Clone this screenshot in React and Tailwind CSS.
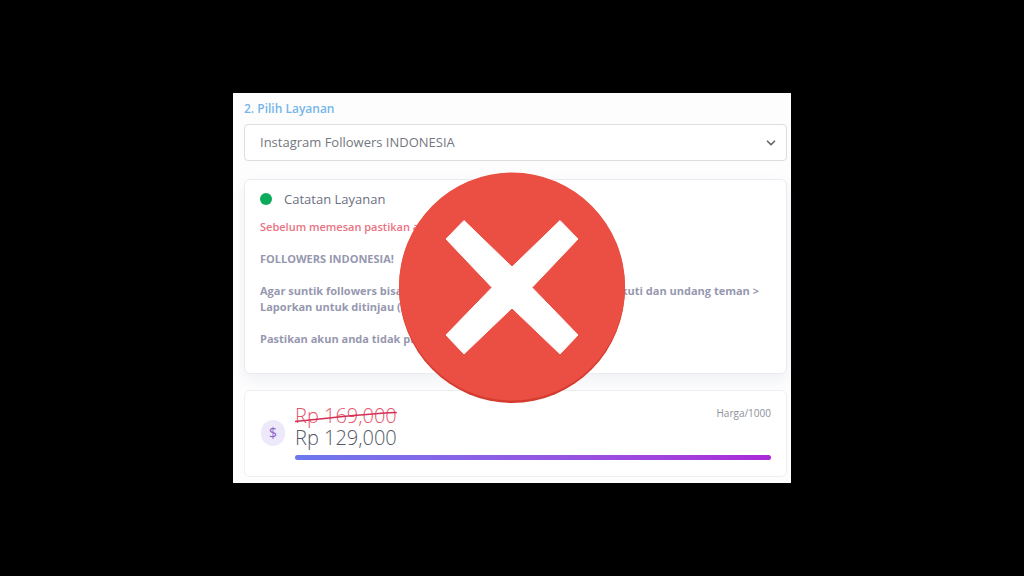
import { ChevronDown } from 'lucide-react';

function ServiceSelect() {
  return (
    <div>
      <label htmlFor="service" className="block text-[12px] leading-4 font-semibold text-[#74b6ea]">
        2. Pilih Layanan
      </label>
      <div className="relative mt-[7px]">
        <select
          id="service"
          className="block h-[37px] w-full appearance-none rounded-[4px] border border-[#dcdde1] bg-white px-[15px] text-[13px] text-[#74777f]"
        >
          <option>Instagram Followers INDONESIA</option>
        </select>
        <ChevronDown
          className="pointer-events-none absolute top-3 right-[9px] size-[14px] text-[#65686e]"
          strokeWidth={3}
        />
      </div>
    </div>
  );
}

function ServiceNotes() {
  return (
    <section className="relative mt-[18px] h-[195px] rounded-[6px] border border-[#e9ebee] bg-white px-[15px] pt-[10px] shadow-[0_6px_14px_rgba(90,100,130,0.08)]">
      <div className="flex items-center gap-3">
        <span className="size-3 rounded-full bg-[#0bab5c]" />
        <h2 className="text-[13px] leading-[18px] text-[#6c6f7f]">Catatan Layanan</h2>
      </div>
      <div className="mt-[11px] text-[11px] leading-4 font-bold text-[#9698b0]">
        <p className="font-semibold text-[#ea7383]">Sebelum memesan pastikan akun</p>
        <p className="mt-4">FOLLOWERS INDONESIA!</p>
        <div className="mt-4 flex justify-between pr-3">
          <span>Agar suntik followers bisa</span>
          <span>Ikuti dan undang teman &gt;</span>
        </div>
        <p>Laporkan untuk ditinjau (non</p>
        <p className="mt-4">Pastikan akun anda tidak private</p>
      </div>
      {/* gagal */}
      <svg
        className="absolute top-[-8px] left-[153px] h-[231px] w-[227px]"
        viewBox="0 0 227 231"
        role="img"
        aria-label="Gagal"
      >
        <ellipse cx="114" cy="116" rx="113" ry="115" fill="#d53c30" />
        <ellipse cx="114" cy="114.5" rx="113" ry="114" fill="#eb4f43" />
        <path
          d="M66 48.5 114 95 162 48.5 180 67 134 115.5 180 163 162 182 114 136 66 182 48 163 94 115.5 48 67Z"
          fill="#fff"
          stroke="#fff"
          strokeWidth="1"
          strokeLinejoin="round"
        />
      </svg>
    </section>
  );
}

function PriceCard() {
  return (
    <section className="mt-4 flex h-[87px] items-center gap-[10px] rounded-[6px] border border-[#eeeff2] bg-white pr-[15px] pb-[2px] pl-4">
      <span className="flex h-[26px] w-6 items-center justify-center rounded-full bg-[#eee8fb] text-[14px] text-[#8c62c4]">
        $
      </span>
      <div className="flex-1">
        <div className="flex items-start justify-between">
          <div className="text-[20px] leading-[22px] font-[350]">
            <div className="relative w-fit text-[#e5566d]">
              Rp 169,000
              <svg className="absolute inset-0 size-full" viewBox="0 0 102 22" preserveAspectRatio="none" aria-hidden="true">
                <path d="M0 16.5 C35 13 65 9 102 7.5" fill="none" stroke="#d32f55" strokeWidth="1.5" />
              </svg>
            </div>
            <div className="text-[#555866]">Rp 129,000</div>
          </div>
          <span className="text-[10px] leading-4 text-[#8d8f99]">Harga/1000</span>
        </div>
        <div className="mt-[6px] h-[5px] rounded-full bg-linear-to-r from-[#6c78ee] to-[#aa28d8]" />
      </div>
    </section>
  );
}

export default function App() {
  return (
    <div className="flex min-h-screen items-center justify-center bg-black font-['Open_Sans','Noto_Sans',sans-serif]">
      <main className="w-full max-w-[558px] bg-[#fdfdfe] pt-2 pr-1 pb-[6px] pl-[11px]">
        <ServiceSelect />
        <ServiceNotes />
        <PriceCard />
      </main>
    </div>
  );
}
